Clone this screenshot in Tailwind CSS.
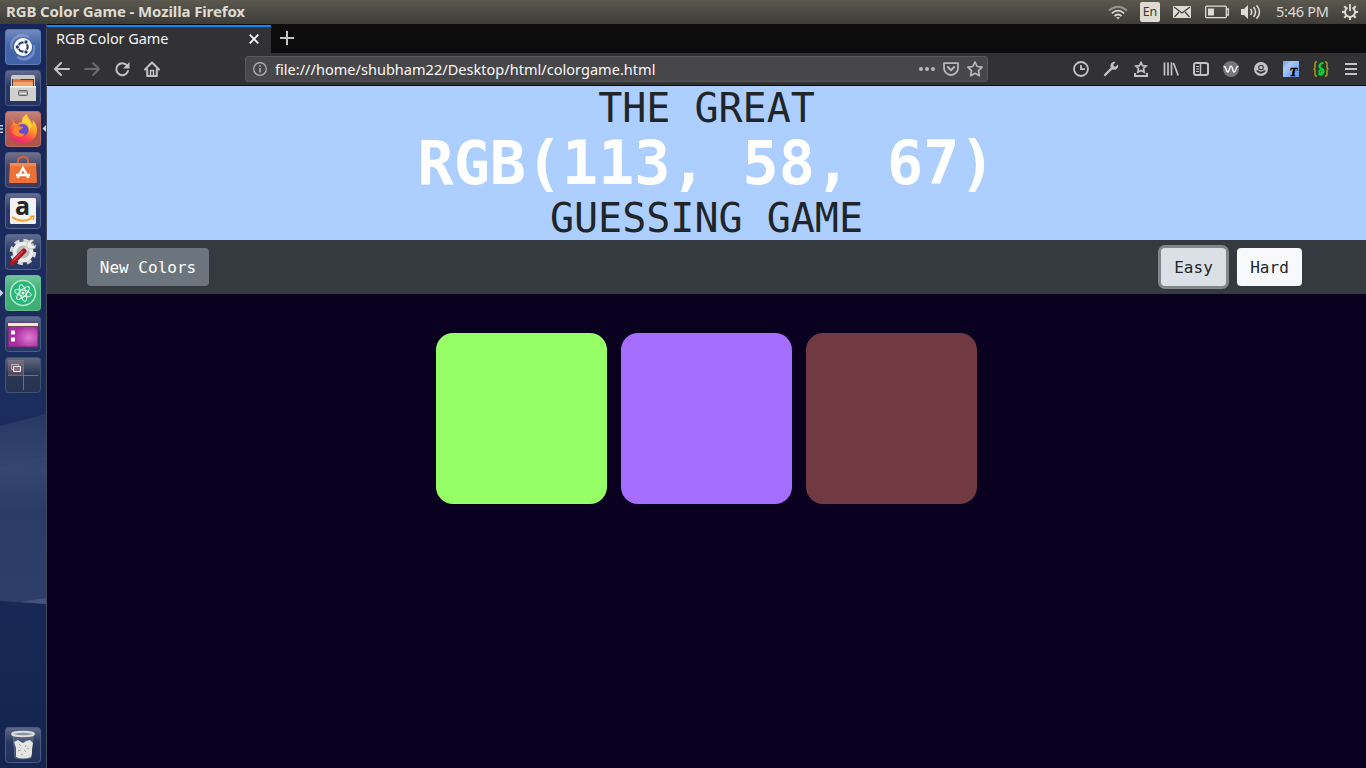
<!DOCTYPE html>
<html lang="en">
<head>
<meta charset="utf-8">
<title>RGB Color Game</title>
<script src="https://cdn.jsdelivr.net/npm/@tailwindcss/browser@4"></script>
</head>
<body class="w-[1366px] h-[768px] overflow-hidden flex flex-col bg-[#0a0020] font-['Noto_Sans',sans-serif]">
<!-- system panel -->
<header class="h-6 shrink-0 flex items-center justify-between bg-linear-to-b from-[#5b594e] via-[#4b4a44] to-[#3d3c38] text-[#dfdbd2]">
  <div class="pl-[6px] pb-[2px] text-[15px] leading-[22px] font-bold whitespace-nowrap tracking-[-0.12px]">RGB Color Game - Mozilla Firefox</div>
  <div class="flex items-center h-6 pr-2">
    <svg class="w-5 h-4 mr-[12px]" viewBox="0 0 20 16" fill="none" stroke="#dfdbd2" stroke-width="1.7"><path d="M1 6.500Q10-1 19 6.500" stroke="#98958c"/><path d="M3.800 9.300Q10 4 16.200 9.300M6.500 12Q10 9 13.500 12"/><path d="M8 13.300h4l-2 2.200z" fill="#dfdbd2" stroke="none"/></svg>
    <div class="w-5 h-5 rounded-[2px] bg-[#dfdbd2] text-[#3a3935] text-[12.5px] leading-5 text-center mr-[13px]">En</div>
    <svg class="w-[18px] h-[12px] mr-[14px]" viewBox="0 0 18 12"><path fill="#dfdbd2" d="M0 0h18v12H0z"/><path d="M1 1l8 6 8-6M1.500 11l4.500-5M16.500 11l-4.500-5" fill="none" stroke="#45433e" stroke-width="1.300"/></svg>
    <svg class="w-6 h-[14px] mr-[12px]" viewBox="0 0 24 14" fill="none" stroke="#dfdbd2" stroke-width="1.300"><rect x=".7" y="1.200" width="20.600" height="11.500" rx="1"/><path d="M21.500 4h1.800v6h-1.800"/><path d="M3 3.500h6v7H3z" fill="#dfdbd2" stroke="none"/></svg>
    <svg class="w-5 h-4 mr-[15px]" viewBox="0 0 20 16" fill="none" stroke="#dfdbd2" stroke-width="1.500"><path d="M0 5h3l4-4v14l-4-4H0z" fill="#dfdbd2" stroke="none"/><path d="M9.500 5Q12 8 9.500 11M12.500 3Q16.500 8 12.500 13M15.500 1.200Q21.500 8 15.500 14.800"/></svg>
    <div class="w-[55px] mr-[11px] pb-[2px] text-[14.5px] leading-[22px] whitespace-nowrap tracking-[-0.25px]">5:46 PM</div>
    <svg class="w-4 h-4" viewBox="0 0 16 16" fill="none" stroke="#dfdbd2"><path d="M10.500 3.600a5 5 0 1 1-5 0" stroke-width="1.900"/><path d="M8 0v7" stroke-width="1.800"/><path d="M0 8h3M13 8h3M8 13v3M2.300 2.300l2 2M13.700 2.300l-2 2M2.300 13.700l2-2M13.700 13.700l-2-2" stroke-width="2.100"/></svg>
  </div>
</header>
<div class="flex flex-1 min-h-0">
<!-- launcher -->
<aside class="relative w-[47px] shrink-0 border-r border-[#444a59] bg-linear-to-b from-[#17265a] via-[#1b2d5d] to-[#142450] flex flex-col items-center pt-[5px] pb-[5px] pr-px">
  <svg class="absolute left-0 top-0 w-[46px] h-[744px]" viewBox="0 0 46 744"><defs><linearGradient id="bg" x2="0" y2="1"><stop stop-color="#273964"/><stop offset=".3" stop-color="#34456f"/><stop offset=".5" stop-color="#2a3b66"/><stop offset="1" stop-color="#2c3e69"/></linearGradient><linearGradient id="gl" x2="0" y2="1"><stop stop-color="#fff" stop-opacity=".32"/><stop offset=".45" stop-color="#fff" stop-opacity=".08"/><stop offset="1" stop-color="#fff" stop-opacity=".06"/></linearGradient></defs><path d="M0 402L46 390V580L0 577z" fill="url(#bg)"/><path d="M0 445L46 434" stroke="#3b4b74" stroke-width=".6"/><path d="M20 578L46 574V580z" fill="#42527a"/></svg>
  <div class="relative flex flex-col gap-[5px]">
    <svg class="w-9 h-9" viewBox="0 0 36 36"><rect x=".5" y=".5" width="35" height="35" rx="3" fill="#3458a1"/><rect x=".5" y=".5" width="35" height="35" rx="3" fill="url(#gl)" stroke="#5f78ae"/><path d="M7 20C4 10 15 4 24 8M29 16c2 10-8 17-16 12M12 28c7 6 16 1 17-6M6 17c0-7 7-12 13-11" fill="none" stroke="#8da9d8" stroke-width="2" opacity=".6"/><circle cx="18" cy="18" r="9" fill="#fff"/><circle cx="18" cy="18" r="4.700" fill="none" stroke="#263b70" stroke-width="2.200"/><g fill="#263b70" stroke="#fff" stroke-width="1"><circle cx="12.300" cy="18" r="2.200"/><circle cx="21" cy="13" r="2.200"/><circle cx="21" cy="23" r="2.200"/></g></svg>
    <svg class="w-9 h-9" viewBox="0 0 36 36"><rect x=".5" y=".5" width="35" height="35" rx="3" fill="url(#gl)" stroke="#4b5c82"/><path d="M6 7q0-2 2-2h20q2 0 2 2v10H6z" fill="#c9c9c5"/><path d="M7 9h22v8H7z" fill="#4d3b35"/><path d="M8 9h7l1 1h12v6H8z" fill="#df7540"/><path d="M8 12h20v4H8z" fill="#f1a36a"/><path d="M5 16h26v15H5z" fill="#d0d0cc"/><path d="M5 16h26v1.500H5z" fill="#f5f5f1"/><rect x="13.500" y="20.500" width="9" height="5" rx="1" fill="#aaa" stroke="#666"/><path d="M15 23.500h6" stroke="#eee"/></svg>
    <svg class="w-9 h-9" viewBox="0 0 36 36"><defs><linearGradient id="ff" x1=".8" y1="0" x2=".3" y2="1"><stop stop-color="#ffe84a"/><stop offset=".45" stop-color="#ff9a25"/><stop offset=".75" stop-color="#ff4150"/><stop offset="1" stop-color="#e62776"/></linearGradient></defs><rect x=".5" y=".5" width="35" height="35" rx="3" fill="#a94b3f"/><rect x=".5" y=".5" width="35" height="35" rx="3" fill="url(#gl)" stroke="#b96f62"/><path d="M8 7c-1 3 0 5 0 5-3 4-4 7-4 10 1 6 7 10 14 10 8 0 14-5 14-13 0-5-2-8-5-10 1 2 1 3 0 4-1-5-5-6-5-10-4 2-5 5-5 8-2 0-3 1-4 2-3 0-5-2-5-6z" fill="url(#ff)"/><circle cx="17.500" cy="19" r="6" fill="#654bd0"/><path d="M9 17c4-3 6-1 9-1 0 2-3 2-4 4 0 2 3 4 6 2-1 5-10 5-13-1z" fill="#ff842d"/><path d="M17 12c6-1 8 4 7 8l3-5-3-7-6-2z" fill="#ffd23d"/></svg>
    <svg class="w-9 h-9" viewBox="0 0 36 36"><rect x=".5" y=".5" width="35" height="35" rx="3" fill="#593b50" fill-opacity=".35"/><rect x=".5" y=".5" width="35" height="35" rx="3" fill="url(#gl)" stroke="#5b6486"/><path d="M13 13V9q0-4 5-4t5 4v4" fill="none" stroke="#cf6239" stroke-width="2"/><path d="M5 11h26l1 19q0 1-1 1H5q-1 0-1-1z" fill="#ed7137"/><path d="M5 11h26v3H5z" fill="#f18b50"/><path d="M12.500 26l5.500-10 5.500 10M11 23h14" fill="none" stroke="#fff" stroke-width="2.400"/></svg>
    <svg class="w-9 h-9" viewBox="0 0 36 36"><rect x=".5" y=".5" width="35" height="35" rx="3" fill="url(#gl)" stroke="#56658a"/><rect x="5" y="5" width="26" height="26" rx="1.500" fill="#f2f2f2"/><text x="17.500" y="22" text-anchor="middle" font-family="Open Sans" font-weight="700" font-size="25" fill="#252525">a</text><path d="M7 24q10 7 20 1" fill="none" stroke="#f99b20" stroke-width="1.800"/><path d="M25 23.500l4-.3-1 4" fill="none" stroke="#f99b20" stroke-width="1.300"/></svg>
    <svg class="w-9 h-9" viewBox="0 0 36 36"><rect x=".5" y=".5" width="35" height="35" rx="3" fill="url(#gl)" stroke="#56658a"/><circle cx="18" cy="18" r="11.700" fill="none" stroke="#d7d7d5" stroke-width="3" stroke-dasharray="5.200 4"/><circle cx="18" cy="18" r="8.500" fill="#bbb" stroke="#ededeb" stroke-width="4"/><path d="M21 16l5-6" stroke="#ddd" stroke-width="4"/><path d="M29 6l-3 3 2 3 3-1q0 4-5 4t-4-5q1-5 7-4" fill="#eee" stroke="#999" stroke-width=".5"/><path d="M7 29L19 17" stroke="#a71520" stroke-width="5" stroke-linecap="round"/><path d="M8 27L18 17" stroke="#df4650" stroke-width="1.500"/></svg>
    <svg class="w-9 h-9" viewBox="0 0 36 36"><rect x=".5" y=".5" width="35" height="35" rx="3" fill="#30a96b"/><rect x=".5" y=".5" width="35" height="35" rx="3" fill="url(#gl)" stroke="#62bd8f"/><circle cx="18" cy="18" r="12.500" fill="#28b77b" stroke="#b7e9c9" stroke-width="1.500"/><g fill="none" stroke="#d5f2df" stroke-width="1.100"><ellipse cx="18" cy="18" rx="8.500" ry="3.200" transform="rotate(15 18 18)"/><ellipse cx="18" cy="18" rx="8.500" ry="3.200" transform="rotate(75 18 18)"/><ellipse cx="18" cy="18" rx="8.500" ry="3.200" transform="rotate(135 18 18)"/></g><circle cx="18" cy="18" r="1.500" fill="#fff"/></svg>
    <svg class="w-9 h-9" viewBox="0 0 36 36"><defs><radialGradient id="pu" cx=".7" cy=".6"><stop stop-color="#e17bd1"/><stop offset="1" stop-color="#a82b9f"/></radialGradient></defs><rect x=".5" y=".5" width="35" height="35" rx="3" fill="url(#gl)" stroke="#4b5c82"/><path d="M3 7h30v24H3z" fill="url(#pu)" stroke="#59315f"/><path d="M3 7h30v3H3z" fill="#f1ebca"/><path d="M3 10h30v1H3z" fill="#75405c"/><path d="M6 14.500h4v4H6zM6 21.500h4v4H6z" fill="#fff"/></svg>
    <svg class="w-9 h-9" viewBox="0 0 36 36"><rect x=".5" y=".5" width="35" height="35" rx="3" fill="#182645"/><path d="M3 3h15v15H3z" fill="#634454" opacity=".65"/><rect x=".5" y=".5" width="35" height="35" rx="3" fill="url(#gl)" stroke="#435173"/><path d="M18.500 3v30M3 18.500h30" stroke="#64718e"/><path d="M6.500 7.500h7v5h-7z" fill="none" stroke="#b9b5c1"/><path d="M8.500 9.500h7v5h-7z" fill="#84727d" stroke="#eee"/></svg>
  </div>
  <svg class="absolute left-0 top-[94px] w-[46px] h-[186px]" viewBox="0 0 46 186" fill="#c9d1df"><path d="M0 7h3v1.500H0zM0 10.300h3v1.500H0zM0 13.500h3v1.500H0zM46 7v7l-3.500-3.500zM0 171.500l3.500 3.500-3.500 3.500z"/></svg>
  <svg class="relative mt-auto w-9 h-9" viewBox="0 0 36 36"><rect x=".5" y=".5" width="35" height="35" rx="3" fill="url(#gl)" stroke="#4b5c82"/><path d="M8 8l2 23q8 2 16 0l2-23z" fill="#8a98ae" opacity=".3" stroke="#c2c8cf"/><path d="M9 15l4-2 3 2 2 1 3-2 4-1 3 3-1 6 0 4-1 4q-8 3-15 0l0-5 0-4z" fill="#e4e4e1"/><path d="M14 17l2 2M21 18l-1 2M13 24l3-1M19 23l2 2M24 22l-2-1M16 28l2-1" fill="none" stroke="#a5a8aa" stroke-width="1"/><ellipse cx="18" cy="7" rx="11" ry="2.200" fill="#8791a0" stroke="#dcdcda" stroke-width="2"/></svg>
</aside>
<!-- browser -->
<section class="flex-1 min-w-0 flex flex-col">
  <div class="h-[29px] shrink-0 bg-[#0c0c0d] flex">
    <div class="w-[224px] h-[28px] mt-px border-t-2 border-[#0a84ff] bg-[#323234] flex items-center justify-between pl-[9px] pr-[12px] pb-[4px]">
      <span class="text-[14.5px] leading-5 text-[#f5f5f7] tracking-[-0.08px] whitespace-nowrap">RGB Color Game</span>
      <svg class="w-[10px] h-[10px] mt-px" viewBox="0 0 10 10" stroke="#f9f9fa" stroke-width="1.800"><path d="M.7.7l8.600 8.600M9.300.7L.7 9.300"/></svg>
    </div>
    <svg class="w-[14px] h-[14px] ml-[9px] mt-[7px]" viewBox="0 0 14 14" stroke="#c3c3c4" stroke-width="2"><path d="M7 0v14M0 7h14"/></svg>
  </div>
  <div class="h-[33px] shrink-0 bg-[#323234] border-b border-[#0c0c0d] flex items-center pl-[7px] pr-[7px]">
    <div class="flex gap-[14px] text-[#c3c3c4]">
      <svg class="w-4 h-4" viewBox="0 0 16 16" fill="none" stroke="currentColor" stroke-width="2" stroke-linecap="round" stroke-linejoin="round"><path d="M15 8H1.500M7 2L1 8l6 6"/></svg>
      <svg class="w-4 h-4 text-[#6b6b6d]" viewBox="0 0 16 16" fill="none" stroke="currentColor" stroke-width="2" stroke-linecap="round" stroke-linejoin="round"><path d="M1 8h13.500M9 2l6 6-6 6"/></svg>
      <svg class="w-4 h-4" viewBox="0 0 16 16" fill="none" stroke="currentColor" stroke-width="2" stroke-linecap="round"><path d="M13 4.500A6 6 0 1 0 14 10"/><path d="M15.500 1v6.500H9z" fill="currentColor" stroke="none"/></svg>
      <svg class="w-4 h-4" viewBox="0 0 16 16" fill="none" stroke="currentColor" stroke-width="2" stroke-linecap="round" stroke-linejoin="round"><path d="M1 8.500L8 1.500l7 7M3.200 8.500V15h9.600V8.500"/><path d="M6.500 15V9.500h3V15" stroke-width="1.500"/></svg>
    </div>
    <div class="ml-[85px] w-[743px] h-[26px] border border-[#58585b] rounded-[3px] bg-[#474749] flex items-center pl-[7px] pr-[4px] text-[#b7b7b9]">
      <svg class="w-[14px] h-[14px]" viewBox="0 0 14 14" fill="none" stroke="currentColor"><circle cx="7" cy="7" r="6.300" stroke-width="1.200"/><path d="M7 6v4.500M7 3.300v1.500" stroke-width="1.500"/></svg>
      <span class="ml-[8px] text-[14.5px] leading-5 whitespace-nowrap text-[#f9f9fa] tracking-[0.03px]">file:///home/shubham22/Desktop/html/colorgame.html</span>
      <svg class="w-4 h-4 ml-auto mr-2" viewBox="0 0 16 16" fill="currentColor"><circle cx="2" cy="8" r="2"/><circle cx="8" cy="8" r="2"/><circle cx="14" cy="8" r="2"/></svg>
      <svg class="w-4 h-4 mr-2" viewBox="0 0 16 16" fill="none" stroke="currentColor" stroke-width="1.800" stroke-linejoin="round" stroke-linecap="round"><path d="M1 2.200h14V7a7 7 0 0 1-14 0z"/><path d="M4.800 6L8 9.200 11.200 6" stroke-width="2"/></svg>
      <svg class="w-4 h-4" viewBox="0 0 16 16" fill="none" stroke="currentColor" stroke-width="1.700" stroke-linejoin="round"><path d="M8 1l2.200 4.500 4.900.7-3.600 3.500.9 5L8 12.300l-4.400 2.400.9-5L.9 6.200l4.900-.7z"/></svg>
    </div>
    <div class="ml-auto flex gap-[14px] text-[#c3c3c4]">
      <svg class="w-4 h-4" viewBox="0 0 16 16" fill="none" stroke="currentColor" stroke-width="1.800"><circle cx="8" cy="8" r="7"/><path d="M8 4v4.200h4"/></svg>
      <svg class="w-4 h-4" viewBox="0 0 16 16"><path d="M2 14L9 7" stroke="currentColor" stroke-width="2.400" stroke-linecap="round"/><path d="M12.500 1C8 0 6.500 5 8 7l1.500 1.500c3 1 6.500-1 5.500-5L12 6l-2-2z" fill="currentColor"/></svg>
      <svg class="w-4 h-4" viewBox="0 0 16 16" fill="none" stroke="currentColor"><path d="M8 1.500l1.600 3.100 3.500.5-2.600 2.400.7 3.600L8 9.500l-3.200 1.600.7-3.600L2.900 5.100l3.500-.5z" stroke-width="1.700"/><path d="M2 12v3h12v-3" stroke-width="2"/></svg>
      <svg class="w-4 h-4" viewBox="0 0 16 16" fill="none" stroke="currentColor" stroke-width="1.700"><path d="M1.500 1.500v13M5 1.500v13M8.500 1.500v13M10.500 2l4.700 12.500"/></svg>
      <svg class="w-4 h-4" viewBox="0 0 16 16" fill="none" stroke="currentColor"><rect x="1" y="2" width="14" height="12" rx="2" stroke-width="2"/><path d="M7.500 2v12" stroke-width="1.500"/><path d="M3 5.500h3M3 8h3M3 10.500h3"/></svg>
      <svg class="w-4 h-4" viewBox="0 0 16 16"><circle cx="8" cy="8" r="8" fill="#77777a"/><path d="M.5 5.500C3 4.500 3 11 4.700 11S6.500 5 8 5s1.500 6 3.300 6S13 4.500 15.500 5.500" fill="none" stroke="#fff" stroke-width="1.400"/></svg>
      <svg class="w-4 h-4" viewBox="0 0 16 16"><circle cx="8" cy="8" r="7" fill="currentColor"/><path d="M3 8.500Q3.500 10 5 9.300A4 4 0 0 0 11 9.300Q12.500 10 13 8.500 12.500 11 11 11.500a5 5 0 0 1-6 0Q3.500 11 3 8.500z" fill="#323234"/><rect x="5.800" y="4.500" width="4.400" height="4.200" rx="1.500" fill="none" stroke="#323234" stroke-width="1.200"/></svg>
      <svg class="w-4 h-4" viewBox="0 0 16 16"><defs><linearGradient id="tt" x2="1" y2="1"><stop stop-color="#6ca0ed"/><stop offset=".3" stop-color="#a9caff"/><stop offset="1" stop-color="#5d91e9"/></linearGradient></defs><path d="M0 0h16v16H0z" fill="url(#tt)"/><text x="6.500" y="14.500" font-family="Liberation Serif" font-size="13" font-weight="700" font-style="italic" fill="#000" stroke="#000" stroke-width=".4">T</text></svg>
      <svg class="w-4 h-4" viewBox="0 0 16 16" fill="none" stroke="#a99a1b" stroke-width="1.500"><path d="M4 .8Q2 .8 2 3v3Q2 8 .5 8 2 8 2 10v3q0 2.200 2 2.200M12 .8q2 0 2 2.200v3q0 2 1.500 2Q14 8 14 10v3q0 2.200-2 2.200"/><path d="M10.500 2Q7 2 6.500 5q0 2 2.500 3t1 4Q8 15 5.500 12.500" stroke="#00d936" stroke-width="2.200"/><circle cx="7.500" cy="10.500" r="1.500" stroke="#00d936"/></svg>
      <svg class="w-4 h-4" viewBox="0 0 16 16" stroke="currentColor" stroke-width="2"><path d="M2 3h12M2 8h12M2 13h12"/></svg>
    </div>
  </div>
  <!-- page -->
  <main class="flex-1 bg-[#0a0020] font-['DejaVu_Sans_Mono',monospace]">
    <h1 class="h-[154px] bg-[#adcfff] text-[#212529] text-center text-[40px] leading-[44px]">
      <span class="block">THE GREAT</span>
      <strong class="block text-[60px] leading-[66px] font-bold text-white">RGB(113, 58, 67)</strong>
      <span class="block">GUESSING GAME</span>
    </h1>
    <nav class="h-[54px] bg-[#343a40] flex items-center justify-between pl-10 pr-16 text-[16px]">
      <button class="h-[38px] w-[122px] pt-[2px] rounded-[4px] bg-[#6c757d] text-white">New Colors</button>
      <div class="flex gap-[11px]">
        <button class="h-[38px] w-[65px] pt-[2px] rounded-[4px] bg-[#dae0e5] text-[#212529] ring-3 ring-[#83878b]">Easy</button>
        <button class="h-[38px] w-[65px] pt-[2px] rounded-[4px] bg-[#f8f9fa] text-[#212529]">Hard</button>
      </div>
    </nav>
    <div class="flex justify-center gap-[14px] pt-[39px]">
      <div class="w-[171px] h-[171px] rounded-[17px] bg-[#96ff66]"></div>
      <div class="w-[171px] h-[171px] rounded-[17px] bg-[#a56eff]"></div>
      <div class="w-[171px] h-[171px] rounded-[17px] bg-[#713a43]"></div>
    </div>
  </main>
</section>
</div>
</body>
</html>
